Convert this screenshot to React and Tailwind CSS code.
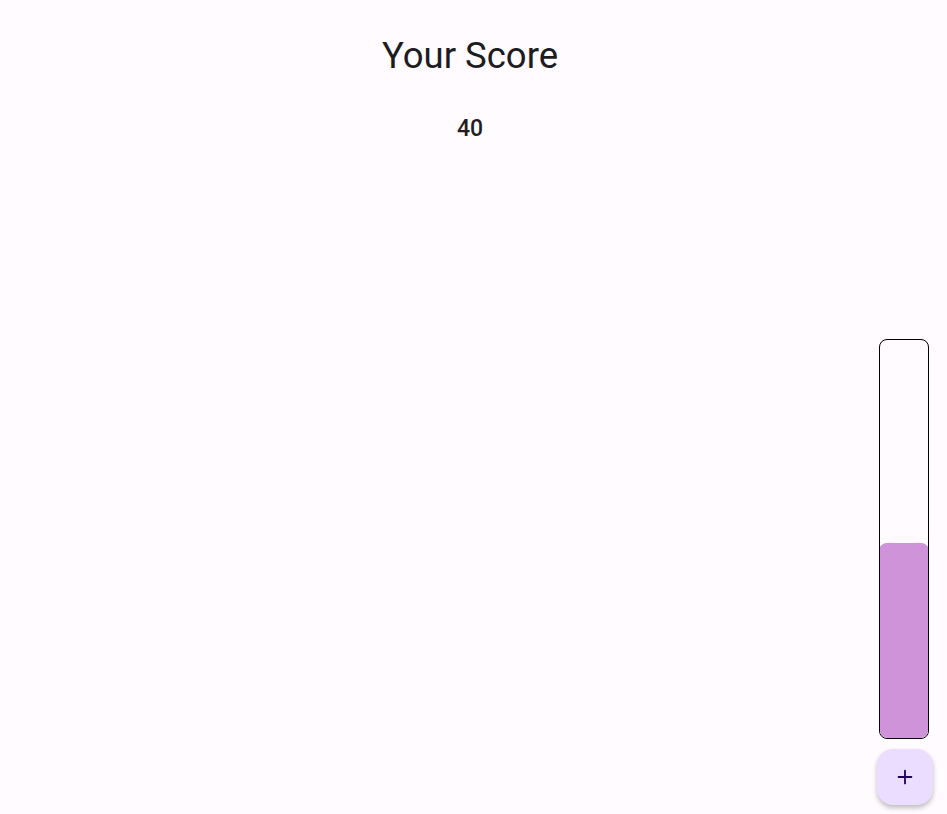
import { Plus } from "lucide-react";

const SCORE = 40;

export default function App() {
  return (
    <div
      className="flex h-[814px] w-full flex-col bg-[#fffbfe] text-[#1c1b1f]"
      style={{ fontFamily: "Roboto, 'Liberation Sans', sans-serif" }}
    >
      {/* Header */}
      <div className="flex flex-col items-center pr-[7px] pt-[31px]">
        <h1 className="text-[36.5px] leading-[50px]">Your Score</h1>
        <p className="mt-[34px] text-[23px] font-medium leading-[28px] text-[#1f1e22]">{SCORE}</p>
      </div>

      <div className="flex-1" />

      {/* Meter + FAB */}
      <div className="flex flex-col items-end pb-[9px] pr-[14px]">
        <div className="flex flex-col items-center gap-[10px]">
          <div className="relative mr-[2px] h-[400px] w-[50px] overflow-hidden rounded-[8px] border border-black">
            <div
              className="absolute bottom-0 left-[-1px] right-[-1px] rounded-[8px] bg-[#ce93d8]"
              style={{ height: "195px" }}
            />
          </div>
          <button className="flex h-[56px] w-[56px] items-center justify-center rounded-[16px] bg-[#eaddff] text-[#21005d] shadow-[0_3px_5px_rgba(0,0,0,0.25)]">
            <Plus size={22} strokeWidth={2} />
          </button>
        </div>
      </div>
    </div>
  );
}
